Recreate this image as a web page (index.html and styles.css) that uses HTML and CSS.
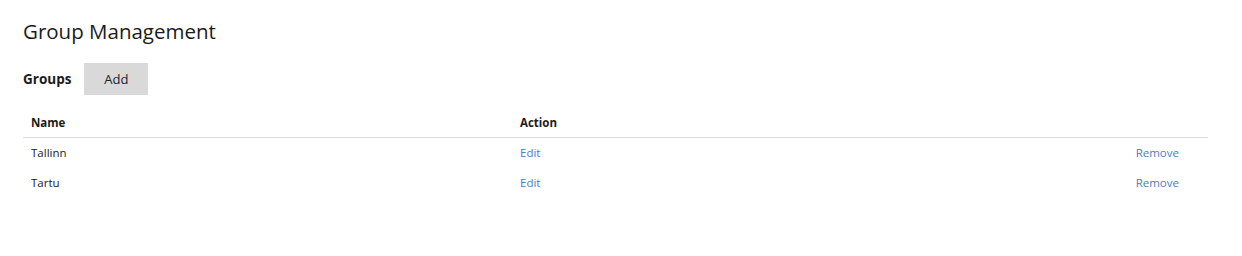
FILE: index.html
```html
<!DOCTYPE html>
<html>
<head>
<meta charset="utf-8">
<link rel="stylesheet" href="styles.css">
</head>
<body>
<div class="page">
  <h1 class="title">Group Management</h1>
  <div class="toolbar">
    <span class="label">Groups</span>
    <button class="btn">Add</button>
  </div>
  <div class="table">
    <div class="row head">
      <div class="cell name">Name</div>
      <div class="cell action">Action</div>
      <div class="cell extra"></div>
    </div>
    <div class="row">
      <div class="cell name">Tallinn</div>
      <div class="cell action"><a class="link">Edit</a></div>
      <div class="cell extra"><a class="link">Remove</a></div>
    </div>
    <div class="row">
      <div class="cell name">Tartu</div>
      <div class="cell action"><a class="link">Edit</a></div>
      <div class="cell extra"><a class="link">Remove</a></div>
    </div>
  </div>
</div>
</body>
</html>
```
FILE: styles.css
```css
html, body { margin: 0; padding: 0; background: #fff; }
body { font-family: "Open Sans", "Noto Sans", sans-serif; color: #1b1b1b; }
.page { padding: 16px 34px 0 23px; }
.title { margin: 0; font-weight: 400; font-size: 20.5px; line-height: 30px; color: #1b1b1b; }
.toolbar { display: flex; align-items: center; gap: 13px; margin-top: 17px; }
.label { font-weight: 700; font-size: 13.5px; }
.btn { width: 64px; height: 32px; border: 0; background: #d9d9d9; font-family: inherit; font-size: 13px; color: #222; padding: 0; }
.table { margin-top: 13px; }
.row { display: grid; grid-template-columns: 489px 1fr auto; height: 29.5px; align-items: center; font-size: 11.5px; }
.row.head { border-bottom: 1px solid #dddddd; font-weight: 700; height: 29px; }
.cell { padding: 0 8px; }
.extra { padding-right: 29px; }
.link { color: #4a7ec0; text-decoration: none; }
```
